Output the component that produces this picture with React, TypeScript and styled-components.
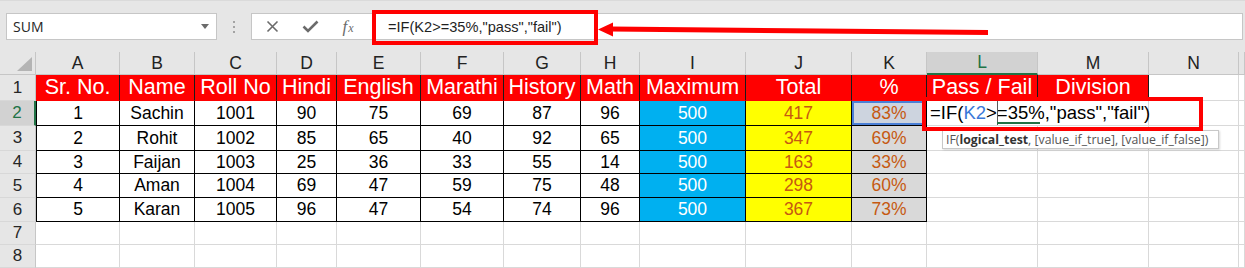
import React from "react";
import styled, { createGlobalStyle, css } from "styled-components";

const GlobalStyle = createGlobalStyle`
  html, body {
    margin: 0;
    padding: 0;
    background: #ffffff;
  }
  body {
    font-family: "Liberation Sans", Arial, sans-serif;
  }
`;

type Tone = "red" | "plain" | "blue" | "yellow" | "gray" | "ref" | "empty";

const COLUMNS = ["A", "B", "C", "D", "E", "F", "G", "H", "I", "J", "K", "L", "M", "N"];

const HEADERS = [
  "Sr. No.",
  "Name",
  "Roll No",
  "Hindi",
  "English",
  "Marathi",
  "History",
  "Math",
  "Maximum",
  "Total",
  "%",
  "Pass / Fail",
  "Division",
];

const STUDENTS: (string | number)[][] = [
  [1, "Sachin", 1001, 90, 75, 69, 87, 96, 500, 417, "83%"],
  [2, "Rohit", 1002, 85, 65, 40, 92, 65, 500, 347, "69%"],
  [3, "Faijan", 1003, 25, 36, 33, 55, 14, 500, 163, "33%"],
  [4, "Aman", 1004, 69, 47, 59, 75, 48, 500, 298, "60%"],
  [5, "Karan", 1005, 96, 47, 54, 74, 96, 500, 367, "73%"],
];

const Page = styled.div`
  position: relative;
  width: 1245px;
  height: 268px;
  overflow: hidden;
  background: #ffffff;
`;

// Formula bar strip
const TopBar = styled.div`
  height: 52px;
  box-sizing: border-box;
  background: #e6e6e6;
  border-top: 1px solid #dadada;
  padding: 12px 2px 12px 6px;
  display: flex;
  align-items: stretch;
`;

const NameBox = styled.div`
  width: 211px;
  box-sizing: border-box;
  background: #ffffff;
  border: 1px solid #c6c6c6;
  display: flex;
  align-items: center;
  padding: 0 6px;
  font-family: "Open Sans", "Noto Sans", sans-serif;
  font-size: 14px;
  color: #262626;
`;

const Caret = styled.span`
  margin-left: auto;
  margin-right: 1px;
  width: 0;
  height: 0;
  border-left: 4px solid transparent;
  border-right: 4px solid transparent;
  border-top: 5px solid #6b6b6b;
`;

const Grip = styled.div`
  width: 34px;
  display: flex;
  flex-direction: column;
  align-items: center;
  justify-content: center;
  gap: 3px;
`;

const GripDot = styled.span`
  width: 2px;
  height: 2px;
  background: #a3a3a3;
`;

const FormulaBox = styled.div`
  flex: 1;
  box-sizing: border-box;
  background: #ffffff;
  border: 1px solid #c6c6c6;
  display: flex;
  align-items: center;
`;

const FxButtons = styled.div`
  width: 120px;
  display: flex;
  align-items: center;
  padding-left: 1px;
`;

const FxButton = styled.div`
  width: 38px;
  height: 25px;
  display: flex;
  align-items: center;
  justify-content: center;
  color: #6b6b6b;
`;

const FxLabel = styled.span`
  font-family: "Liberation Serif", "DejaVu Serif", serif;
  font-style: italic;
  font-size: 17px;
  color: #6b6b6b;
  small {
    font-size: 12px;
    margin-left: 1px;
  }
`;

const FormulaText = styled.div`
  padding-left: 15px;
  font-family: "Liberation Sans", Arial, sans-serif;
  font-size: 14.6px;
  color: #1f1f1f;
  white-space: nowrap;
`;

// Worksheet grid
const Sheet = styled.div`
  display: grid;
  grid-template-columns: 36px 84px 75px 82px 60px 84px 83px 77px 59px 106px 106px 75px 111px 111px 90px 1fr;
  grid-template-rows: 23px 26px 25px 25px 23px 24px 24px 23px 23px;
  font-family: "Liberation Sans", Arial, sans-serif;
`;

const Corner = styled.div`
  position: relative;
  background: #e6e6e6;
  border-right: 1px solid #c6c6c6;
  border-bottom: 1px solid #c6c6c6;
  &::after {
    content: "";
    position: absolute;
    right: 3px;
    bottom: 3px;
    width: 0;
    height: 0;
    border-left: 15px solid transparent;
    border-bottom: 14px solid #b4b4b4;
  }
`;

const ColHead = styled.div<{ $active?: boolean }>`
  box-sizing: border-box;
  display: flex;
  align-items: center;
  justify-content: center;
  background: ${(p) => (p.$active ? "#d2d2d2" : "#e6e6e6")};
  color: ${(p) => (p.$active ? "#217346" : "#222222")};
  font-size: 17.5px;
  border-right: 1px solid #c6c6c6;
  border-bottom: ${(p) => (p.$active ? "2px solid #217346" : "1px solid #c6c6c6")};
`;

const RowHead = styled.div<{ $active?: boolean }>`
  box-sizing: border-box;
  display: flex;
  align-items: center;
  justify-content: center;
  background: ${(p) => (p.$active ? "#d2d2d2" : "#e6e6e6")};
  color: ${(p) => (p.$active ? "#217346" : "#262626")};
  font-size: 17px;
  border-right: ${(p) => (p.$active ? "2px solid #217346" : "1px solid #c6c6c6")};
  border-bottom: 1px solid #d8d8d8;
`;

const toneStyles: Record<Tone, ReturnType<typeof css>> = {
  red: css`
    background: #ff0000;
    color: #ffffff;
    font-size: 21.5px;
    border-right: 1px solid #1a1a1a;
    border-bottom: 1px solid #ff0000;
  `,
  plain: css`
    background: #ffffff;
    color: #000000;
  `,
  blue: css`
    background: #00b0f0;
    color: #ffffff;
  `,
  yellow: css`
    background: #ffff00;
    color: #c65911;
  `,
  gray: css`
    background: #d9d9d9;
    color: #c65911;
  `,
  ref: css`
    background: #cdd4df;
    color: #c65911;
    box-shadow: inset 0 0 0 2px #4a7fd6;
  `,
  empty: css`
    background: #ffffff;
    border-right: 1px solid #d9d9d9;
    border-bottom: 1px solid #d9d9d9;
  `,
};

const Cell = styled.div<{ $tone: Tone; $first?: boolean }>`
  position: relative;
  box-sizing: border-box;
  display: flex;
  align-items: center;
  justify-content: center;
  white-space: nowrap;
  font-size: 17.5px;
  border-right: 1px solid #000000;
  border-bottom: 1px solid #000000;
  ${(p) => p.$first && p.$tone !== "red" && "border-left: 1px solid #000000;"}
  ${(p) => toneStyles[p.$tone]}
`;

const Editor = styled.div`
  position: absolute;
  z-index: 2;
  top: 0;
  left: 0;
  width: 221px;
  height: 100%;
  box-sizing: border-box;
  background: #ffffff;
  padding-left: 3px;
  display: flex;
  align-items: center;
  font-size: 18.5px;
  color: #000000;
  &::before {
    content: "";
    position: absolute;
    left: 70px;
    top: 0;
    bottom: 0;
    width: 1px;
    background: #5a5a5a;
  }
  &::after {
    content: "";
    position: absolute;
    left: 70px;
    bottom: 1px;
    width: 43px;
    height: 2px;
    background: #217346;
  }
`;

const RefText = styled.span`
  color: #3b78d8;
`;

// Annotation overlays
const Highlight = styled.div<{ $left: number; $top: number; $width: number; $height: number }>`
  position: absolute;
  z-index: 5;
  left: ${(p) => p.$left}px;
  top: ${(p) => p.$top}px;
  width: ${(p) => p.$width}px;
  height: ${(p) => p.$height}px;
  box-sizing: border-box;
  border: 4px solid #ff0000;
  pointer-events: none;
`;

const Arrow = styled.svg`
  position: absolute;
  z-index: 6;
  left: 596px;
  top: 18px;
`;

const Tooltip = styled.div`
  position: absolute;
  z-index: 4;
  left: 942px;
  top: 130px;
  width: 277px;
  height: 19px;
  box-sizing: border-box;
  background: #ffffff;
  border: 1px solid #c8c8c8;
  box-shadow: 1px 1px 2px rgba(0, 0, 0, 0.15);
  display: flex;
  align-items: center;
  padding-left: 3px;
  font-family: "Open Sans", "Noto Sans", sans-serif;
  font-size: 12.3px;
  color: #555555;
  white-space: nowrap;
  b {
    color: #333333;
    font-weight: 700;
  }
`;

function toneFor(row: number, col: number): Tone {
  if (row === 1) return col < 13 ? "red" : "empty";
  if (row >= 2 && row <= 6 && col < 11) {
    if (col === 8) return "blue";
    if (col === 9) return "yellow";
    if (col === 10) return row === 2 ? "ref" : "gray";
    return "plain";
  }
  return "empty";
}

function valueFor(row: number, col: number) {
  if (row === 1) return HEADERS[col] ?? "";
  if (row >= 2 && row <= 6) return STUDENTS[row - 2][col] ?? "";
  return "";
}

export default function App() {
  const rows = [1, 2, 3, 4, 5, 6, 7, 8];
  const cols = [...COLUMNS, ""];

  return (
    <Page>
      <GlobalStyle />
      <TopBar>
        <NameBox>
          SUM
          <Caret />
        </NameBox>
        <Grip>
          <GripDot />
          <GripDot />
          <GripDot />
        </Grip>
        <FormulaBox>
          <FxButtons>
            <FxButton>
              <svg width="13" height="13" viewBox="0 0 13 13">
                <path d="M1.5 1.5 L11.5 11.5 M11.5 1.5 L1.5 11.5" stroke="#6b6b6b" strokeWidth="1.6" />
              </svg>
            </FxButton>
            <FxButton>
              <svg width="17" height="13" viewBox="0 0 17 13">
                <path d="M1.5 6.5 L6 11 L15.5 1.5" stroke="#6b6b6b" strokeWidth="2.6" fill="none" />
              </svg>
            </FxButton>
            <FxButton>
              <FxLabel>
                f<small>x</small>
              </FxLabel>
            </FxButton>
          </FxButtons>
          <FormulaText>=IF(K2&gt;=35%,"pass","fail")</FormulaText>
        </FormulaBox>
      </TopBar>

      <Sheet>
        <Corner />
        {cols.map((c, i) => (
          <ColHead key={"h" + i} $active={c === "L"}>
            {c}
          </ColHead>
        ))}
        {rows.map((r) => (
          <React.Fragment key={r}>
            <RowHead $active={r === 2}>{r}</RowHead>
            {cols.map((_, ci) => {
              const tone = toneFor(r, ci);
              return (
                <Cell key={ci} $tone={tone} $first={ci === 0 && r > 1 && r < 7}>
                  {valueFor(r, ci)}
                  {r === 2 && ci === 11 && (
                    <Editor>
                      =IF(<RefText>K2</RefText>&gt;=35%,"pass","fail")
                    </Editor>
                  )}
                </Cell>
              );
            })}
          </React.Fragment>
        ))}
      </Sheet>

      <Highlight $left={372} $top={10} $width={226} $height={35} />
      <Highlight $left={922} $top={97} $width={281} $height={34} />
      <Arrow width="396" height="24" viewBox="0 0 396 24">
        <path d="M15 11 L392 14.5" stroke="#ff0000" strokeWidth="5" />
        <polygon points="2,11.5 17,4.5 17,18.5" fill="#ff0000" />
      </Arrow>
      <Tooltip>
        IF(<b>logical_test</b>, [value_if_true], [value_if_false])
      </Tooltip>
    </Page>
  );
}
